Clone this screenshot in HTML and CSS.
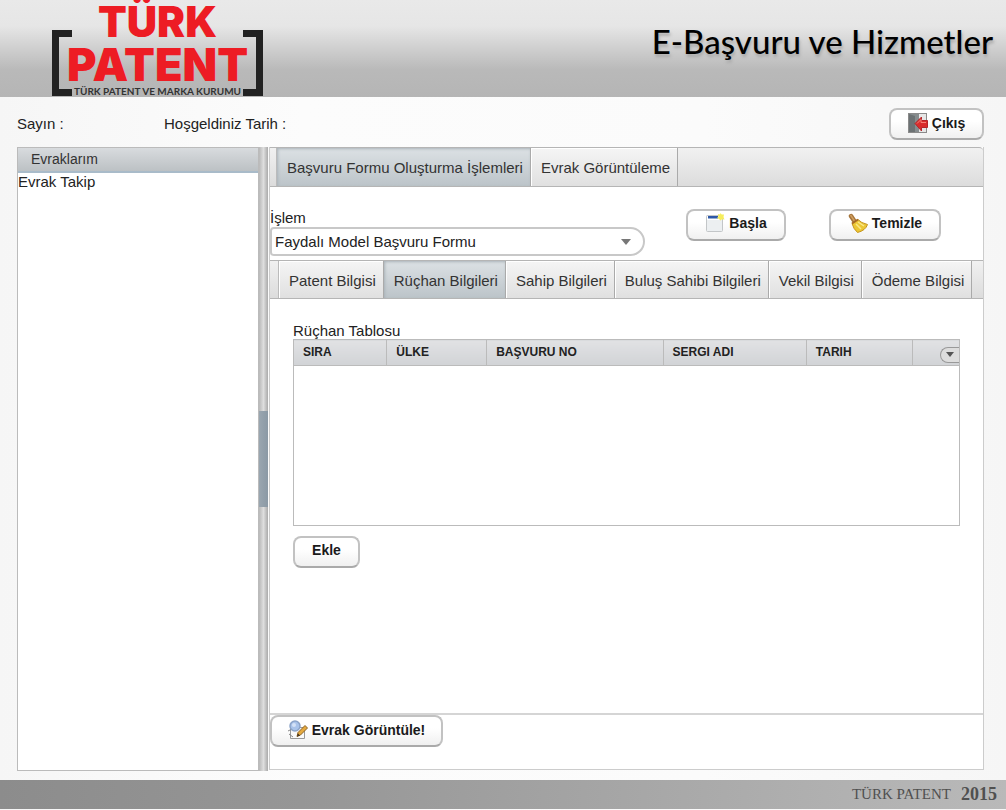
FILE: index.html
```html
<!DOCTYPE html>
<html lang="tr">
<head>
<meta charset="utf-8">
<title>E-Başvuru ve Hizmetler</title>
<link rel="stylesheet" href="styles.css">
</head>
<body>
<header class="banner">
  <div class="logo">
    <span class="logo-top">TÜRK</span>
    <span class="logo-main">PATENT</span>
    <span class="logo-sub">TÜRK PATENT VE MARKA KURUMU</span>
  </div>
  <h1 class="banner-title">E-Başvuru ve Hizmetler</h1>
</header>

<div class="welcome">
  <span class="welcome-user">Sayın :</span>
  <span>Hoşgeldiniz Tarih :</span>
  <button type="button" class="btn btn-exit">
    <svg class="icon" viewBox="0 0 20 20" aria-hidden="true">
      <rect x="0.500" y="0.500" width="18" height="19" fill="#e6e6e6" stroke="#8a8a8a"/>
      <path d="M1 1h10v18H1z" fill="#868c8e"/>
      <path d="M1 1l6 2v16H1z" fill="#6c7274"/>
      <path d="M7 10.500L13.500 4v3.500h6v7h-6V18z" fill="#d92d2d" stroke="#b3262a"/>
      <path d="M9 10.500l4-4v3h5" fill="none" stroke="#f58379"/>
    </svg>
    Çıkış
  </button>
</div>

<div class="workspace">
  <aside class="sidebar">
    <h2 class="sidebar-title">Evraklarım</h2>
    <a href="#takip" class="sidebar-link">Evrak Takip</a>
  </aside>
  <div class="splitter"><span class="splitter-grip"></span></div>
  <main class="content">
    <nav class="tabs tabs-main" aria-label="Ana sekmeler">
      <button type="button" class="tab tab-active">Başvuru Formu Oluşturma İşlemleri</button>
      <button type="button" class="tab">Evrak Görüntüleme</button>
    </nav>
    <div class="toolbar">
      <div class="field">
        <label for="islem">İşlem</label>
        <div class="combo">
          <select id="islem"><option>Faydalı Model Başvuru Formu</option></select>
          <svg class="combo-arrow" viewBox="0 0 10 6" aria-hidden="true"><path d="M0 0h10L5 6z" fill="#777"/></svg>
        </div>
      </div>
      <button type="button" class="btn btn-start">
        <svg class="icon" viewBox="0 0 20 20" aria-hidden="true">
          <rect x="1.500" y="2.500" width="16" height="16" rx="1" fill="#eceff1" stroke="#c3c6c8"/>
          <rect x="2" y="3" width="15" height="4" fill="#fff"/>
          <rect x="3" y="3" width="10" height="2.500" fill="#2d58a8"/>
          <path d="M15.500 0l1.200 1.500L19 1.500l-.5 2.500L19.500 6.500l-2.500-.3-1.500 1.300-1.500-1.500L12 5l1.500-1.500L13 1l2 .4z" fill="#f5ed5c"/>
        </svg>
        Başla
      </button>
      <button type="button" class="btn btn-clear">
        <svg class="icon" viewBox="0 0 20 20" aria-hidden="true">
          <path d="M3 3l4 6" stroke="#a5743a" stroke-width="4.500" stroke-linecap="round"/>
          <path d="M2.500 2l4 6" stroke="#d0a062" stroke-width="1.500"/>
          <path d="M10 6.500q3 3.500 9.500 5-2 6-10 8Q5.500 16 4 10.500z" fill="#ecc735" stroke="#c5941d"/>
          <path d="M10 9l6 4M8 11l5 5" stroke="#fae98a" stroke-width="1.500" fill="none"/>
          <path d="M4 10.500L10 6.500" stroke="#a86b26" stroke-width="2"/>
        </svg>
        Temizle
      </button>
    </div>
    <nav class="tabs tabs-form" aria-label="Form sekmeleri">
      <button type="button" class="tab">Patent Bilgisi</button>
      <button type="button" class="tab tab-active">Rüçhan Bilgileri</button>
      <button type="button" class="tab">Sahip Bilgileri</button>
      <button type="button" class="tab">Buluş Sahibi Bilgileri</button>
      <button type="button" class="tab">Vekil Bilgisi</button>
      <button type="button" class="tab">Ödeme Bilgisi</button>
    </nav>
    <section class="panel">
      <div class="table-box">
        <table class="grid">
          <caption>Rüçhan Tablosu</caption>
          <colgroup><col class="c-sira"><col class="c-ulke"><col class="c-no"><col class="c-sergi"><col class="c-tarih"><col class="c-menu"></colgroup>
          <thead>
            <tr>
              <th>SIRA</th><th>ÜLKE</th><th>BAŞVURU NO</th><th>SERGI ADI</th><th>TARIH</th>
              <th class="menu-cell"><button type="button" class="column-menu" aria-label="Sütunlar"><svg viewBox="0 0 8 5" aria-hidden="true"><path d="M0 0h8L4 5z" fill="#555"/></svg></button></th>
            </tr>
          </thead>
          <tbody><tr><td colspan="6"></td></tr></tbody>
        </table>
      </div>
      <button type="button" class="btn btn-add">Ekle</button>
    </section>
    <div class="actions">
      <button type="button" class="btn btn-view">
        <svg class="icon" viewBox="0 0 20 20" aria-hidden="true">
          <path d="M2.500 7.500h14v11h-14z" fill="#fafafa" stroke="#999"/>
          <path d="M0 11l4-2M1 14l4 3" stroke="#888"/>
          <circle cx="7" cy="6" r="5" fill="#a9c3ea" stroke="#8ba3c8" stroke-width="1.500"/>
          <circle cx="6" cy="5" r="2" fill="#d4e2f7"/>
          <path d="M9 16.500l1-4 7-7 2.500 2.500-7 7z" fill="#e5a93e" stroke="#8b6224"/>
          <path d="M9 16.500l1-3 2 2z" fill="#443322"/>
        </svg>
        Evrak Görüntüle!
      </button>
    </div>
  </main>
</div>

<footer class="footer"><span>TÜRK PATENT</span><span class="footer-year">2015</span></footer>
</body>
</html>
```

FILE: styles.css
```css
*, *::before, *::after { box-sizing: border-box; }

body {
  margin: 0;
  min-height: 100vh;
  padding-bottom: 1px;
  display: flex;
  flex-direction: column;
  background: linear-gradient(90deg, #f6f6f6, #fcfcfc 30%, #fbfbfb 70%, #f6f6f6);
  color: #222;
  font: 15px/18px "Liberation Sans", Arial, sans-serif;
}

button, select { font: inherit; color: inherit; margin: 0; }

/* Banner */
.banner {
  display: flex;
  justify-content: space-between;
  height: 97px;
  padding: 0 13px 0 52px;
  background: linear-gradient(#e9e9e9 0, #e6e6e6 26px, #b9b9b9 70px, #b5b5b5 100%);
}

.logo {
  position: relative;
  width: 211px;
  display: flex;
  flex-direction: column;
  align-items: center;
  color: #ed1c24;
  font-family: Inter, sans-serif;
  font-weight: 900;
  white-space: nowrap;
}
.logo::before, .logo::after {
  content: "";
  position: absolute;
  top: 30px;
  bottom: 1px;
  width: 20px;
  border: solid #222;
}
.logo::before { left: 0; border-width: 7px 0 7px 7px; }
.logo::after { right: 0; border-width: 7px 7px 7px 0; }
.logo-top { font-size: 42px; line-height: 43px; }
.logo-main { font-size: 45px; line-height: 43px; }
.logo-sub {
  color: #333;
  font-family: Lato, sans-serif;
  font-size: 10px;
  line-height: 11px;
  font-weight: 700;
}

.banner-title {
  margin: 0;
  color: #000;
  font: 500 33px/82px Lato, sans-serif;
  text-shadow: 1px 3px 3px #aaa;
}

/* Welcome line */
.welcome {
  display: flex;
  align-items: center;
  height: 50px;
  padding: 4px 22px 0 17px;
}
.welcome-user { width: 147px; }

.btn {
  display: inline-flex;
  align-items: center;
  justify-content: center;
  gap: 4px;
  height: 32px;
  padding: 0 0 3px;
  border: 2px solid #c2c2c2;
  border-bottom-color: #aaa;
  border-radius: 8px;
  background: linear-gradient(#fff 40%, #f0f0f0);
  color: #1b1b1b;
  font-size: 14px;
  font-weight: 700;
}
.icon { width: 20px; height: 20px; fill: none; }
.btn-exit { width: 95px; margin-left: auto; }
.btn-start { width: 100px; margin: 0 43px 0 auto; }
.btn-clear { width: 112px; }
.btn-add { width: 67px; margin-top: 10px; }
.btn-view { width: 173px; }

/* Workspace */
.workspace {
  flex: 1;
  display: flex;
  padding: 0 22px 9px 17px;
}
.sidebar {
  width: 242px;
  border: 1px solid #bbb;
  background: #fff;
}
.sidebar-title {
  margin: 0;
  height: 25px;
  padding: 2px 13px;
  border-bottom: 2px solid #a9bbc9;
  background: linear-gradient(#d8dbde, #bcc1c4);
  font-size: 14px;
  font-weight: 400;
  color: #333;
}
.sidebar-link { color: #222; text-decoration: none; }

.splitter {
  width: 9px;
  display: flex;
  align-items: center;
  background: linear-gradient(90deg, #b8b8b8, #dedede 50%, #aaa);
}
.splitter-grip {
  width: 100%;
  height: 96px;
  background: linear-gradient(90deg, #9aa6b0, #8b99a5);
}

.content {
  flex: 1;
  min-width: 0;
  display: flex;
  flex-direction: column;
  margin: 0 0 1px 1px;
  border: 1px solid #ccc;
  border-top: 0;
  background: #fff;
}

/* Tabs */
.tabs {
  display: flex;
  height: 39px;
  border: solid #b5b5b5;
  border-width: 1px 0;
  background: linear-gradient(#f1f1f1, #dcdcdc);
}
.tabs-main { height: 40px; padding-left: 6px; border-radius: 0 4px 0 0; }
.tabs-form { padding-left: 8px; }
.tab {
  padding: 2px 7px 0 10px;
  border: 0;
  border-right: 1px solid #aaa;
  background: linear-gradient(#f5f5f5, #e0e0e0);
  box-shadow: inset 1px 1px #fff;
  color: #333;
  white-space: nowrap;
}
.tab:first-child { border-left: 1px solid #bbb; }
.tab-active {
  background: linear-gradient(#dce1e4, #bcc4c9);
  box-shadow: inset 1px 1px 3px #a9b2b8;
}

/* Form toolbar */
.toolbar {
  display: flex;
  align-items: center;
  height: 73px;
  padding: 2px 42px 0 0;
}
.field { width: 375px; padding-top: 15px; }
.field label { display: block; }
.combo { position: relative; }
.combo select {
  width: 100%;
  height: 29px;
  padding: 2px 3px 0;
  appearance: none;
  border: 2px solid #c8c8c8;
  border-radius: 4px 15px 15px 4px;
  background: #fff;
}
.combo-arrow {
  position: absolute;
  right: 14px;
  top: 12px;
  width: 10px;
  height: 6px;
  pointer-events: none;
}

/* Panel and table */
.panel { flex: 1; padding: 23px 23px 0; }
.table-box { border-bottom: 1px solid #bbb; }
.grid {
  width: 100%;
  table-layout: fixed;
  border-collapse: collapse;
}
.grid caption { line-height: 17px; text-align: left; }
.grid th {
  height: 26px;
  padding: 0 9px 2px;
  border: 1px solid #bbb;
  background: linear-gradient(#e1e2e4, #d1d3d6);
  font-size: 12px;
  line-height: 18px;
  text-align: left;
  white-space: nowrap;
}
.grid td {
  height: 159px;
  padding: 0;
  border: 1px solid #bbb;
  border-bottom: 0;
}
.c-sira { width: 14%; }
.c-ulke { width: 15%; }
.c-no { width: 26.5%; }
.c-sergi { width: 21.5%; }
.c-tarih { width: 16%; }
.grid .menu-cell { padding: 2px 0 0; text-align: right; }
.column-menu {
  display: inline-flex;
  align-items: center;
  justify-content: center;
  width: 19px;
  height: 16px;
  padding: 0;
  border: 1px solid #999;
  border-right: 0;
  border-radius: 8px 0 0 8px;
  background: #ddd;
}
.column-menu svg { width: 8px; height: 5px; }

.actions {
  height: 56px;
  border-top: 2px solid #d5d5d5;
}

/* Footer */
.footer {
  display: flex;
  justify-content: flex-end;
  gap: 10px;
  height: 29px;
  padding-right: 9px;
  background: linear-gradient(90deg, #8c8c8c, #969696 30%, #b9b9b9);
  color: #505050;
  font: 15px/29px "Liberation Serif", serif;
}
.footer-year { font-size: 18px; font-weight: 700; }
```
